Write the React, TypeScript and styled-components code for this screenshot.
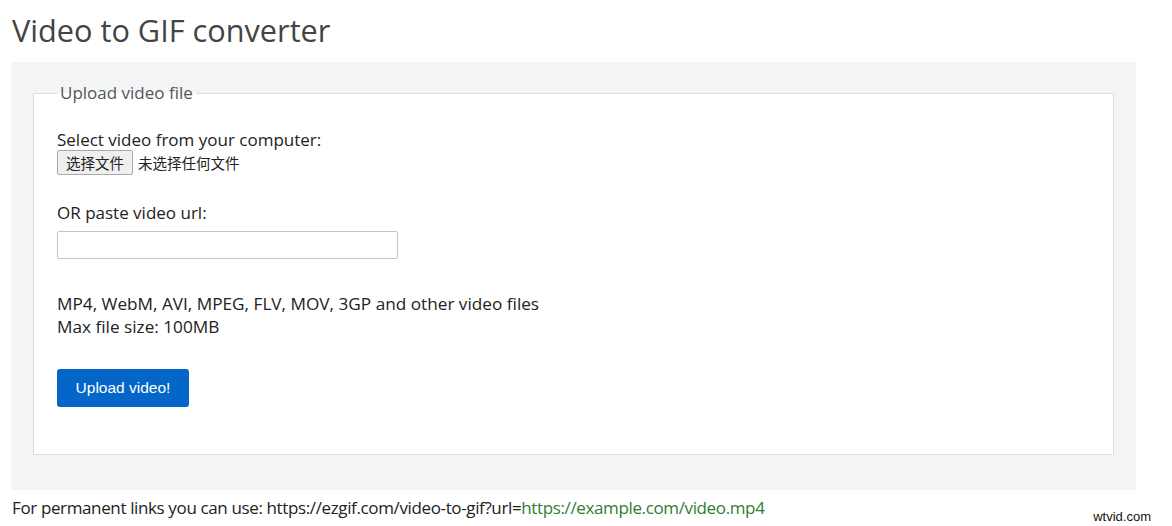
import styled, { createGlobalStyle } from "styled-components";

const GlobalStyle = createGlobalStyle`
  body {
    margin: 0;
    background: #ffffff;
    font-family: "Open Sans", "Noto Sans", "Noto Sans CJK SC", sans-serif;
    color: #222;
  }
`;

const Page = styled.div`
  position: relative;
  width: 1172px;
  height: 526px;
  padding: 0 11px;
  box-sizing: border-box;
  overflow: hidden;
`;

const Title = styled.h1`
  margin: 0;
  padding: 10px 0 0 1px;
  height: 62px;
  box-sizing: border-box;
  font-size: 30.7px;
  font-weight: 400;
  line-height: 40px;
  color: #444;
`;

const Panel = styled.div`
  background: #f3f4f6;
  width: 1125px;
  box-sizing: border-box;
  padding: 20px 22px 35px 22px;
`;

const Fieldset = styled.fieldset`
  margin: 0;
  border: 1px solid #dcdedf;
  background: #fff;
  padding: 24px 24px 47px 23px;
  min-width: 0;
`;

const Legend = styled.legend`
  padding: 0 3px;
  margin-left: 0;
  font-size: 17px;
  color: #555;
  line-height: 22px;
`;

const Label = styled.div`
  font-size: 17px;
  line-height: 23px;
  color: #222;
`;

const FileRow = styled.div`
  display: flex;
  align-items: center;
  gap: 5px;
  margin-top: -1px;
  margin-bottom: 26px;
`;

const FileButton = styled.button`
  height: 25px;
  width: 76px;
  padding: 0;
  border: 1px solid #a9a9a9;
  border-radius: 2px;
  background: #efefef;
  font-family: "Noto Sans CJK SC", sans-serif;
  font-size: 14.5px;
  color: #222;
`;

const FileName = styled.span`
  font-family: "Noto Sans CJK SC", sans-serif;
  font-size: 14.5px;
  color: #222;
`;

const UrlInput = styled.input`
  display: block;
  width: 341px;
  height: 28px;
  box-sizing: border-box;
  margin-top: 7px;
  margin-bottom: 33px;
  border: 1px solid #c4c4c4;
  border-radius: 2px;
  background: #fff;
`;

const Info = styled.div`
  font-size: 17.2px;
  line-height: 23px;
  color: #222;
  margin-bottom: 31px;
`;

const UploadButton = styled.button`
  height: 38px;
  width: 132px;
  border: none;
  border-radius: 3px;
  background: #0466c8;
  color: #fff;
  font-family: "Liberation Sans", Arial, sans-serif;
  font-size: 15.5px;
`;

const Footer = styled.p`
  margin: 8px 0 0 1px;
  font-size: 17px;
  line-height: 20px;
  color: #222;
  letter-spacing: -0.37px;
`;

const GreenLink = styled.span`
  color: #2e7d32;
`;

const Watermark = styled.div`
  position: absolute;
  right: 21px;
  bottom: 2px;
  font-family: "Liberation Sans", Arial, sans-serif;
  font-size: 13px;
  color: #111;
`;

export default function App() {
  return (
    <Page>
      <GlobalStyle />
      <Title>Video to GIF converter</Title>
      <Panel>
        <Fieldset>
          <Legend>Upload video file</Legend>
          <Label>Select video from your computer:</Label>
          <FileRow>
            <FileButton>选择文件</FileButton>
            <FileName>未选择任何文件</FileName>
          </FileRow>
          <Label>OR paste video url:</Label>
          <UrlInput type="text" />
          <Info>
            MP4, WebM, AVI, MPEG, FLV, MOV, 3GP and other video files
            <br />
            Max file size: 100MB
          </Info>
          <UploadButton>Upload video!</UploadButton>
        </Fieldset>
      </Panel>
      <Footer>
        For permanent links you can use: https://ezgif.com/video-to-gif?url=
        <GreenLink>https://example.com/video.mp4</GreenLink>
      </Footer>
      <Watermark>wtvid.com</Watermark>
    </Page>
  );
}
